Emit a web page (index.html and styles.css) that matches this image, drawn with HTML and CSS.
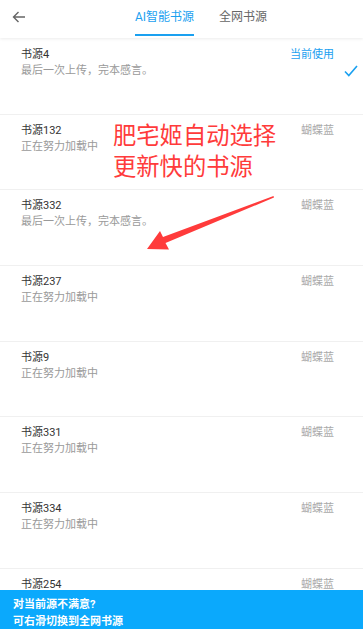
FILE: index.html
```html
<!DOCTYPE html>
<html lang="zh">
<head>
<meta charset="utf-8">
<title>书源</title>
<link rel="stylesheet" href="styles.css">
</head>
<body>
<div class="app">
  <header class="header">
    <div class="back">
      <svg width="14" height="12" viewBox="0 0 14 12"><path d="M13 6H1.5M6.5 1L1.5 6L6.5 11" fill="none" stroke="#666" stroke-width="1.4"/></svg>
    </div>
    <nav class="tabs">
      <div class="tab active">AI智能书源</div>
      <div class="tab">全网书源</div>
    </nav>
  </header>
  <main class="list">
    <div class="row first">
      <div class="info"><div class="title">书源4</div><div class="sub">最后一次上传，完本感言。</div></div>
      <div class="side"><div class="current">当前使用</div>
        <svg class="check" width="14" height="12" viewBox="0 0 14 12"><path d="M1 6.5L4.8 10.5L13 1" fill="none" stroke="#1aa0f0" stroke-width="1.6"/></svg>
      </div>
    </div>
    <div class="row">
      <div class="info"><div class="title">书源132</div><div class="sub">正在努力加载中</div></div>
      <div class="side"><div class="author">蝴蝶蓝</div></div>
    </div>
    <div class="row">
      <div class="info"><div class="title">书源332</div><div class="sub">最后一次上传，完本感言。</div></div>
      <div class="side"><div class="author">蝴蝶蓝</div></div>
    </div>
    <div class="row">
      <div class="info"><div class="title">书源237</div><div class="sub">正在努力加载中</div></div>
      <div class="side"><div class="author">蝴蝶蓝</div></div>
    </div>
    <div class="row">
      <div class="info"><div class="title">书源9</div><div class="sub">正在努力加载中</div></div>
      <div class="side"><div class="author">蝴蝶蓝</div></div>
    </div>
    <div class="row">
      <div class="info"><div class="title">书源331</div><div class="sub">正在努力加载中</div></div>
      <div class="side"><div class="author">蝴蝶蓝</div></div>
    </div>
    <div class="row">
      <div class="info"><div class="title">书源334</div><div class="sub">正在努力加载中</div></div>
      <div class="side"><div class="author">蝴蝶蓝</div></div>
    </div>
    <div class="row">
      <div class="info"><div class="title">书源254</div></div>
      <div class="side"><div class="author">蝴蝶蓝</div></div>
    </div>
  </main>
  <div class="note">肥宅姬自动选择<br>更新快的书源</div>
  <svg class="arrow" width="363" height="629" viewBox="0 0 363 629"><polygon points="273.5,196 163,237 160,231 147,249 169,249.5 165.5,243 274,197.5" fill="#ff3b3b"/></svg>
  <footer class="tip">
    <div>对当前源不满意?</div>
    <div>可右滑切换到全网书源</div>
  </footer>
</div>
</body>
</html>
```
FILE: styles.css
```css
html, body {
  margin: 0;
  padding: 0;
  background: #fff;
}
body {
  font-family: Roboto, "Noto Sans CJK SC", sans-serif;
}
.app {
  position: relative;
  width: 363px;
  height: 629px;
  overflow: hidden;
  background: #fff;
}
.header {
  position: relative;
  z-index: 2;
  height: 38px;
  display: flex;
  align-items: flex-start;
  background: #fff;
  box-shadow: 0 1px 3px rgba(0,0,0,0.08);
}
.back {
  width: 135px;
  padding-left: 12px;
  padding-top: 11px;
  box-sizing: border-box;
  height: 38px;
}
.back svg { display: block; }
.tabs {
  display: flex;
  gap: 25px;
}
.tab {
  font-size: 12px;
  line-height: 16px;
  padding: 9px 0 9px;
  color: #666;
  border-bottom: 2px solid transparent;
}
.tab.active {
  color: #1aa0f0;
  border-bottom-color: #1aa0f0;
}
.list {
  display: flex;
  flex-direction: column;
}
.row {
  height: 75.7px;
  box-sizing: border-box;
  flex: none;
  display: flex;
  justify-content: space-between;
  padding: 8px 5px 0 21px;
  border-top: 1px solid #f0f0f0;
}
.row.first { border-top-color: transparent; }
.title {
  font-size: 11px;
  line-height: 16px;
  color: #333;
}
.sub {
  font-size: 11px;
  line-height: 16px;
  color: #9a9a9a;
}
.side {
  display: flex;
  flex-direction: column;
  align-items: flex-end;
}
.current {
  font-size: 11px;
  line-height: 16px;
  color: #1aa0f0;
  margin-right: 24px;
}
.check {
  display: block;
  margin-top: 2px;
}
.author {
  font-size: 11px;
  line-height: 16px;
  color: #aaa;
  margin-right: 24px;
}
.note {
  position: absolute;
  left: 113px;
  top: 119px;
  font-family: "Noto Sans CJK SC", sans-serif;
  font-size: 23.3px;
  line-height: 31px;
  color: #ff3b3b;
  z-index: 3;
}
.arrow {
  position: absolute;
  left: 0;
  top: 0;
  z-index: 3;
}
.tip {
  position: absolute;
  left: 0;
  right: 0;
  bottom: 0;
  height: 39px;
  box-sizing: border-box;
  padding: 6px 13px 0;
  background: #0ba9fc;
  color: #fff;
  font-size: 11px;
  line-height: 17px;
  font-weight: bold;
  z-index: 4;
}
```
